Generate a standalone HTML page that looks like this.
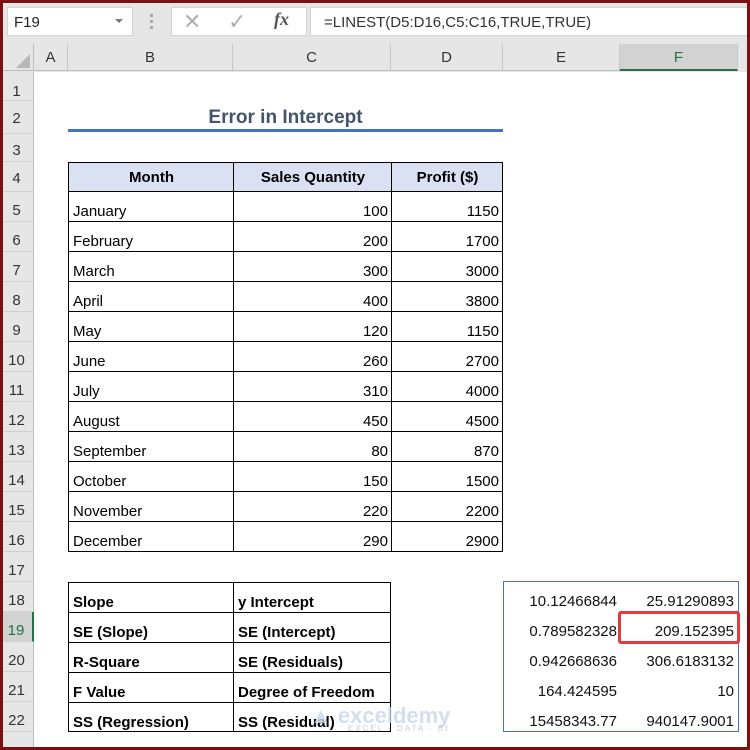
<!DOCTYPE html>
<html><head><meta charset="utf-8"><style>
*{margin:0;padding:0;box-sizing:border-box}
body{width:750px;height:750px;overflow:hidden;background:#fff;font-family:"Liberation Sans",Calibri,sans-serif;position:relative}
.a{position:absolute}
.frame{position:absolute;left:0;top:0;width:750px;height:750px;border:3px solid #7a1010;pointer-events:none;z-index:10}
.rh{position:absolute;left:0;width:34px;background:#e6e6e6;border-bottom:1px solid #d0d0d0;border-right:1px solid #bdbdbd;font-size:15px;color:#333;text-align:center}
.ch{position:absolute;top:44px;height:27px;line-height:27px;border-right:1px solid #c6c6c6;font-size:15px;color:#333;text-align:center;border-bottom:1px solid #bdbdbd}
.c{position:absolute;height:30px;font-size:15px;color:#000;line-height:15px;padding:12px 3px 0 4px;border:1px solid #000;white-space:nowrap}
.r{text-align:right}
.b{font-weight:bold}
.n{position:absolute;font-size:15px;color:#111;text-align:right;white-space:nowrap;line-height:15px}
</style></head><body>
<div class="a" style="left:0;top:0;width:750px;height:72px;background:#e6e6e6"></div>
<div class="a" style="left:7px;top:7px;width:126px;height:29px;background:#fff;border:1px solid #d4d4d4;font-size:15px;line-height:29px;padding-left:6px;color:#222">F19</div>
<div class="a" style="left:115px;top:19px;width:0;height:0;border-left:4px solid transparent;border-right:4px solid transparent;border-top:4px solid #777"></div>
<div class="a" style="left:150px;top:14px;width:3px;height:3px;background:#aaa;box-shadow:0 6px #aaa,0 12px #aaa"></div>
<div class="a" style="left:171px;top:7px;width:136px;height:29px;background:#fff;border:1px solid #d4d4d4"></div>
<div class="a" style="left:183px;top:9px;font-size:22px;color:#b0b0b0">✕</div>
<div class="a" style="left:228px;top:9px;font-size:22px;color:#b0b0b0">✓</div>
<div class="a" style="left:274px;top:9px;font-size:18px;color:#555;font-style:italic;font-family:'Liberation Serif',serif;font-weight:bold">fx</div>
<div class="a" style="left:310px;top:7px;width:440px;height:29px;background:#fff;border:1px solid #d4d4d4;font-size:15px;line-height:30px;padding-left:13px;color:#333">=LINEST(D5:D16,C5:C16,TRUE,TRUE)</div>
<div class="a" style="left:0;top:44px;width:34px;height:27px;border-right:1px solid #bdbdbd;border-bottom:1px solid #bdbdbd"></div>
<div class="a" style="left:16px;top:54px;width:0;height:0;border-left:14px solid transparent;border-bottom:14px solid #b8b8b8"></div>
<div class="ch" style="left:34px;width:34px">A</div>
<div class="ch" style="left:68px;width:165px">B</div>
<div class="ch" style="left:233px;width:158px">C</div>
<div class="ch" style="left:391px;width:112px">D</div>
<div class="ch" style="left:503px;width:117px">E</div>
<div class="ch" style="left:620px;width:118px;background:#d2d2d2;border-bottom:2px solid #217346;color:#217346">F</div>
<div class="a" style="left:0;top:72px;width:34px;height:678px;background:#e6e6e6;border-right:1px solid #bdbdbd"></div>
<div class="rh" style="top:72px;height:29px;line-height:40px">1</div>
<div class="rh" style="top:101px;height:33px;line-height:36px">2</div>
<div class="rh" style="top:134px;height:28px;line-height:34px">3</div>
<div class="rh" style="top:162px;height:30px;line-height:34px">4</div>
<div class="rh" style="top:192px;height:30px;line-height:38px">5</div>
<div class="rh" style="top:222px;height:30px;line-height:38px">6</div>
<div class="rh" style="top:252px;height:30px;line-height:38px">7</div>
<div class="rh" style="top:282px;height:30px;line-height:38px">8</div>
<div class="rh" style="top:312px;height:30px;line-height:38px">9</div>
<div class="rh" style="top:342px;height:30px;line-height:38px">10</div>
<div class="rh" style="top:372px;height:30px;line-height:38px">11</div>
<div class="rh" style="top:402px;height:30px;line-height:38px">12</div>
<div class="rh" style="top:432px;height:30px;line-height:38px">13</div>
<div class="rh" style="top:462px;height:30px;line-height:38px">14</div>
<div class="rh" style="top:492px;height:30px;line-height:38px">15</div>
<div class="rh" style="top:522px;height:30px;line-height:38px">16</div>
<div class="rh" style="top:552px;height:30px;line-height:38px">17</div>
<div class="rh" style="top:582px;height:30px;line-height:38px">18</div>
<div class="rh" style="top:612px;height:30px;line-height:38px;background:#d2d2d2;color:#217346;border-right:2px solid #217346">19</div>
<div class="rh" style="top:642px;height:30px;line-height:38px">20</div>
<div class="rh" style="top:672px;height:30px;line-height:38px">21</div>
<div class="rh" style="top:702px;height:30px;line-height:38px">22</div>
<div class="rh" style="top:732px;height:18px"></div>

<div class="a" style="left:68px;top:107px;width:435px;text-align:center;font-size:19px;font-weight:bold;color:#44546a">Error in Intercept</div>
<div class="a" style="left:68px;top:129px;width:435px;height:3px;background:#4472c4"></div>

<div class="c b" style="left:68px;top:162px;width:166px;background:#d9e1f2;text-align:center;padding-top:7px">Month</div>
<div class="c b" style="left:233px;top:162px;width:159px;background:#d9e1f2;text-align:center;padding-top:7px">Sales Quantity</div>
<div class="c b" style="left:391px;top:162px;width:112px;background:#d9e1f2;text-align:center;padding-top:7px">Profit ($)</div>

<div class="c" style="left:68px;top:191px;width:166px;height:31px">January</div><div class="c r" style="left:233px;top:191px;width:159px;height:31px">100</div><div class="c r" style="left:391px;top:191px;width:112px;height:31px">1150</div>
<div class="c" style="left:68px;top:221px;width:166px;height:31px">February</div><div class="c r" style="left:233px;top:221px;width:159px;height:31px">200</div><div class="c r" style="left:391px;top:221px;width:112px;height:31px">1700</div>
<div class="c" style="left:68px;top:251px;width:166px;height:31px">March</div><div class="c r" style="left:233px;top:251px;width:159px;height:31px">300</div><div class="c r" style="left:391px;top:251px;width:112px;height:31px">3000</div>
<div class="c" style="left:68px;top:281px;width:166px;height:31px">April</div><div class="c r" style="left:233px;top:281px;width:159px;height:31px">400</div><div class="c r" style="left:391px;top:281px;width:112px;height:31px">3800</div>
<div class="c" style="left:68px;top:311px;width:166px;height:31px">May</div><div class="c r" style="left:233px;top:311px;width:159px;height:31px">120</div><div class="c r" style="left:391px;top:311px;width:112px;height:31px">1150</div>
<div class="c" style="left:68px;top:341px;width:166px;height:31px">June</div><div class="c r" style="left:233px;top:341px;width:159px;height:31px">260</div><div class="c r" style="left:391px;top:341px;width:112px;height:31px">2700</div>
<div class="c" style="left:68px;top:371px;width:166px;height:31px">July</div><div class="c r" style="left:233px;top:371px;width:159px;height:31px">310</div><div class="c r" style="left:391px;top:371px;width:112px;height:31px">4000</div>
<div class="c" style="left:68px;top:401px;width:166px;height:31px">August</div><div class="c r" style="left:233px;top:401px;width:159px;height:31px">450</div><div class="c r" style="left:391px;top:401px;width:112px;height:31px">4500</div>
<div class="c" style="left:68px;top:431px;width:166px;height:31px">September</div><div class="c r" style="left:233px;top:431px;width:159px;height:31px">80</div><div class="c r" style="left:391px;top:431px;width:112px;height:31px">870</div>
<div class="c" style="left:68px;top:461px;width:166px;height:31px">October</div><div class="c r" style="left:233px;top:461px;width:159px;height:31px">150</div><div class="c r" style="left:391px;top:461px;width:112px;height:31px">1500</div>
<div class="c" style="left:68px;top:491px;width:166px;height:31px">November</div><div class="c r" style="left:233px;top:491px;width:159px;height:31px">220</div><div class="c r" style="left:391px;top:491px;width:112px;height:31px">2200</div>
<div class="c" style="left:68px;top:521px;width:166px;height:31px">December</div><div class="c r" style="left:233px;top:521px;width:159px;height:31px">290</div><div class="c r" style="left:391px;top:521px;width:112px;height:31px">2900</div>

<div class="c b" style="left:68px;top:582px;width:166px;height:31px">Slope</div><div class="c b" style="left:233px;top:582px;width:158px;height:31px">y Intercept</div>
<div class="c b" style="left:68px;top:612px;width:166px;height:31px">SE (Slope)</div><div class="c b" style="left:233px;top:612px;width:158px;height:31px">SE (Intercept)</div>
<div class="c b" style="left:68px;top:642px;width:166px;height:31px">R-Square</div><div class="c b" style="left:233px;top:642px;width:158px;height:31px">SE (Residuals)</div>
<div class="c b" style="left:68px;top:672px;width:166px;height:31px">F Value</div><div class="c b" style="left:233px;top:672px;width:158px;height:31px">Degree of Freedom</div>
<div class="c b" style="left:68px;top:702px;width:166px;height:30px">SS (Regression)</div><div class="c b" style="left:233px;top:702px;width:158px;height:30px">SS (Residual)</div>

<div class="a" style="left:310px;top:703px;font-size:22px;font-weight:bold;color:#c9d6ec;opacity:.8">&#9650; exceldemy</div>
<div class="a" style="left:348px;top:724px;font-size:8px;color:#ccc;letter-spacing:2px">EXCEL · DATA · BI</div>

<div class="a" style="left:503px;top:581px;width:236px;height:151px;border:1px solid #4472c4"></div>
<div class="n" style="left:503px;top:594px;width:114px">10.12466844</div><div class="n" style="left:620px;top:594px;width:114px">25.91290893</div>
<div class="n" style="left:503px;top:624px;width:114px">0.789582328</div><div class="n" style="left:620px;top:624px;width:114px">209.152395</div>
<div class="n" style="left:503px;top:654px;width:114px">0.942668636</div><div class="n" style="left:620px;top:654px;width:114px">306.6183132</div>
<div class="n" style="left:503px;top:684px;width:114px">164.424595</div><div class="n" style="left:620px;top:684px;width:114px">10</div>
<div class="n" style="left:503px;top:714px;width:114px">15458343.77</div><div class="n" style="left:620px;top:714px;width:114px">940147.9001</div>
<div class="a" style="left:618px;top:611px;width:122px;height:33px;border:3px solid #e03c3c;border-radius:3px"></div>
<div class="frame"></div>
</body></html>
